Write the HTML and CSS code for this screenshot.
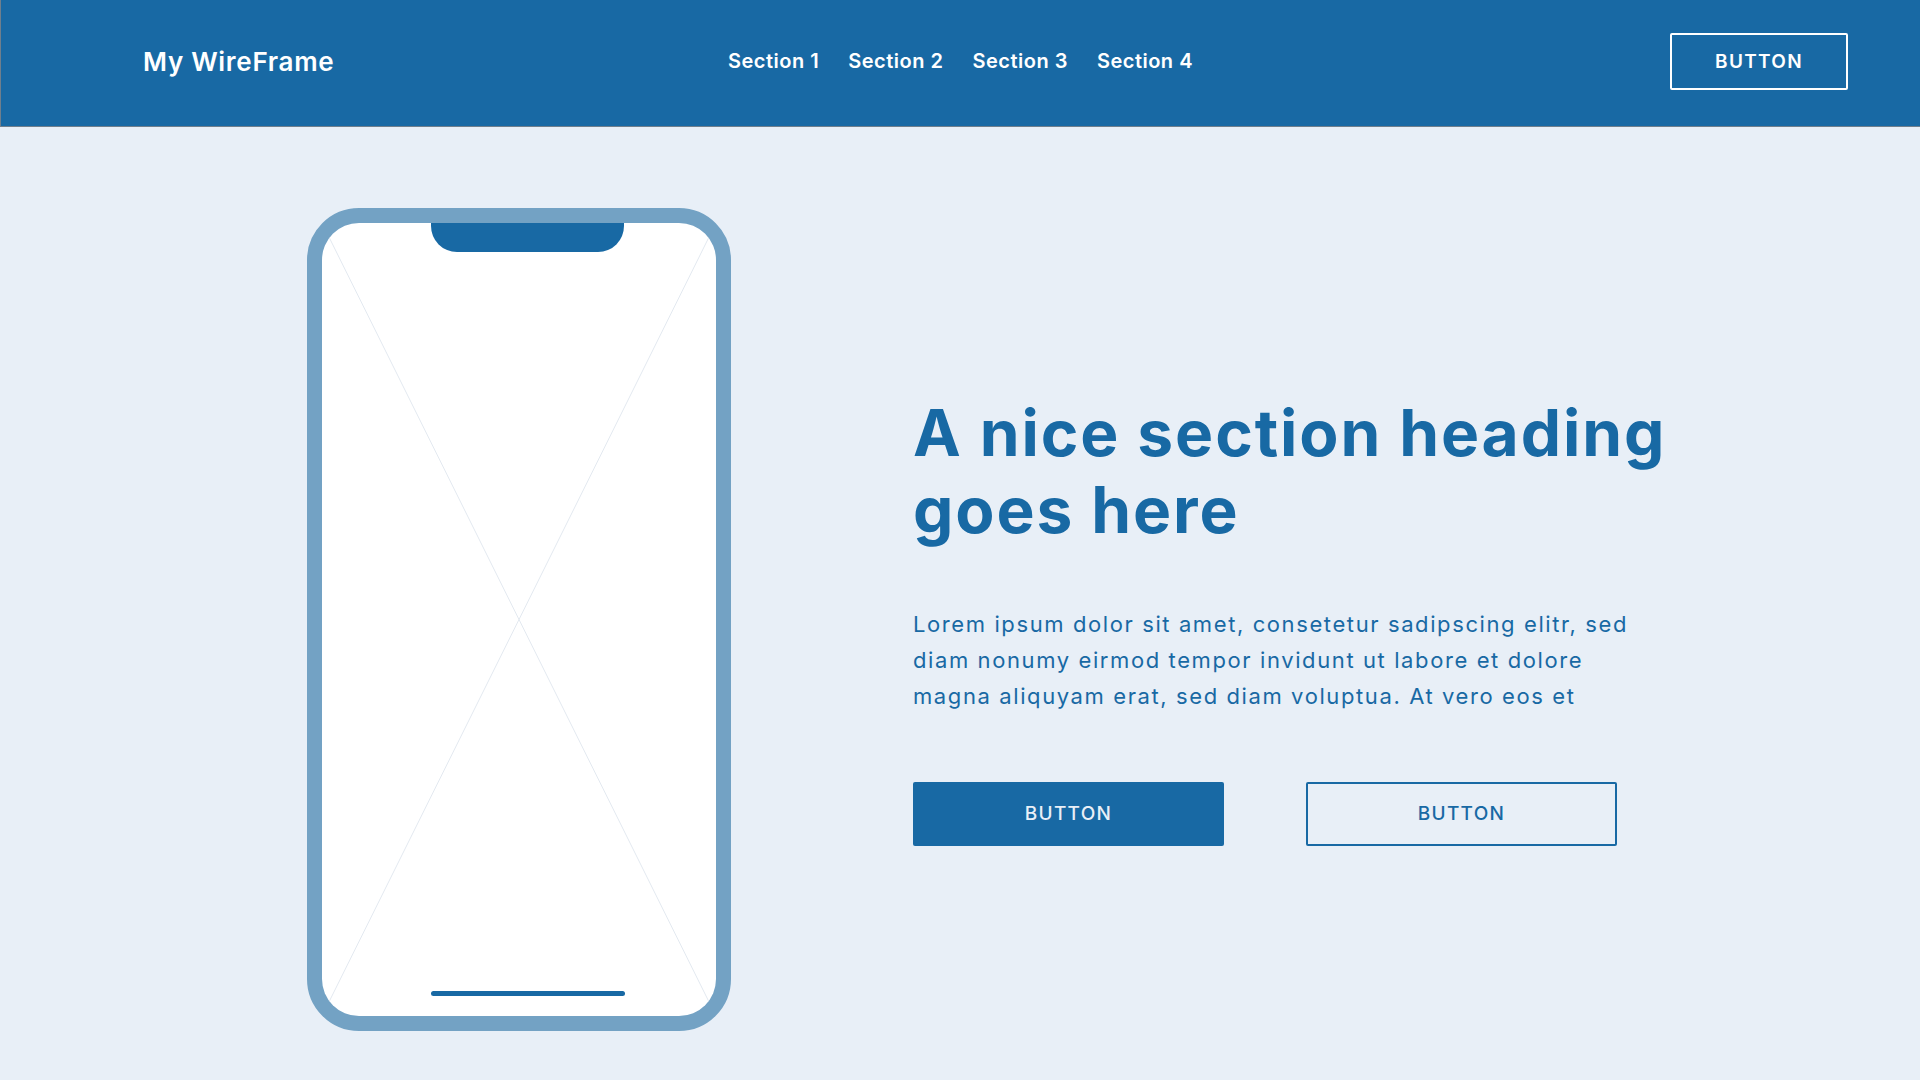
FILE: index.html
```html
<!DOCTYPE html>
<html lang="en">
<head>
<meta charset="utf-8">
<title>My WireFrame</title>
<link rel="stylesheet" href="styles.css">
</head>
<body>
<header class="topbar">
  <div class="logo">My WireFrame</div>
  <nav class="nav">
    <a class="nav-link" href="#">Section 1</a>
    <a class="nav-link" href="#">Section 2</a>
    <a class="nav-link" href="#">Section 3</a>
    <a class="nav-link" href="#">Section 4</a>
  </nav>
  <div class="topbar-actions">
    <a class="btn btn-header" href="#">BUTTON</a>
  </div>
</header>
<main class="hero">
  <div class="phone">
    <div class="screen">
      <svg class="cross" viewBox="0 0 100 100" preserveAspectRatio="none">
        <line x1="0" y1="0" x2="100" y2="100" vector-effect="non-scaling-stroke"/>
        <line x1="100" y1="0" x2="0" y2="100" vector-effect="non-scaling-stroke"/>
      </svg>
      <div class="notch"></div>
      <div class="home-bar"></div>
    </div>
  </div>
  <section class="copy">
    <h1 class="heading">A nice section heading<br>goes here</h1>
    <p class="lead">Lorem ipsum dolor sit amet, consetetur sadipscing elitr, sed<br>diam nonumy eirmod tempor invidunt ut labore et dolore<br>magna aliquyam erat, sed diam voluptua. At vero eos et</p>
    <div class="actions">
      <a class="btn btn-solid" href="#">BUTTON</a>
      <a class="btn btn-outline" href="#">BUTTON</a>
    </div>
  </section>
</main>
</body>
</html>
```

FILE: styles.css
```css
* { box-sizing: border-box; }

html, body {
  margin: 0;
  padding: 0;
}

body {
  width: 1920px;
  height: 1080px;
  overflow: hidden;
  background: #e8eff7;
  font-family: Inter, "Open Sans", "Liberation Sans", sans-serif;
  color: #1869a4;
}

a { text-decoration: none; }

.topbar {
  height: 127px;
  background: #1869a4;
  border-left: 1px solid #6f7f8d;
  border-bottom: 1px solid #6f7f8d;
  display: grid;
  grid-template-columns: 1fr auto 1fr;
  align-items: center;
  padding: 0 72px 4px;
}

.logo {
  color: #ffffff;
  font-size: 26px;
  font-weight: 600;
  letter-spacing: 0.7px;
  margin-left: 70px;
}

.nav {
  display: flex;
  gap: 29px;
}

.nav-link {
  color: #ffffff;
  font-size: 20px;
  font-weight: 600;
  letter-spacing: 0.5px;
}

.topbar-actions {
  display: flex;
  justify-content: flex-end;
}

.btn {
  display: flex;
  align-items: center;
  justify-content: center;
  font-size: 19px;
  border-radius: 2px;
  letter-spacing: 1.3px;
}

.btn-header {
  width: 178px;
  height: 57px;
  border: 2px solid #ffffff;
  color: #ffffff;
  font-weight: 600;
}

.hero {
  display: flex;
  align-items: center;
  gap: 182px;
  padding: 81px 0 0 307px;
}

.phone {
  width: 424px;
  height: 823px;
  flex: none;
  border: 15px solid #73a2c4;
  border-radius: 52px;
  background: #73a2c4;
}

.screen {
  position: relative;
  width: 100%;
  height: 100%;
  background: #ffffff;
  border-radius: 37px;
  overflow: hidden;
}

.cross {
  position: absolute;
  inset: 0;
  width: 100%;
  height: 100%;
}

.cross line {
  stroke: #e3e9f0;
  stroke-width: 1;
}

.notch {
  position: absolute;
  top: 0;
  left: 109px;
  width: 193px;
  height: 29px;
  background: #1869a4;
  border-radius: 0 0 26px 26px;
}

.home-bar {
  position: absolute;
  left: 109px;
  bottom: 20px;
  width: 194px;
  height: 5px;
  background: #1869a4;
  border-radius: 3px;
}

.copy {
  display: flex;
  flex-direction: column;
}

.heading {
  margin: 0;
  font-size: 64px;
  line-height: 77px;
  font-weight: 700;
  letter-spacing: 1.9px;
  color: #1869a4;
}

.lead {
  margin: 58px 0 0;
  font-size: 22px;
  line-height: 36px;
  font-weight: 400;
  letter-spacing: 1.6px;
  color: #1869a4;
}

.actions {
  display: flex;
  gap: 82px;
  margin-top: 68px;
}

.btn-solid,
.btn-outline {
  width: 311px;
  height: 64px;
  font-weight: 500;
}

.btn-solid {
  background: #1869a4;
  color: #e8eff7;
}

.btn-outline {
  border: 2px solid #1869a4;
  color: #1869a4;
}
```
